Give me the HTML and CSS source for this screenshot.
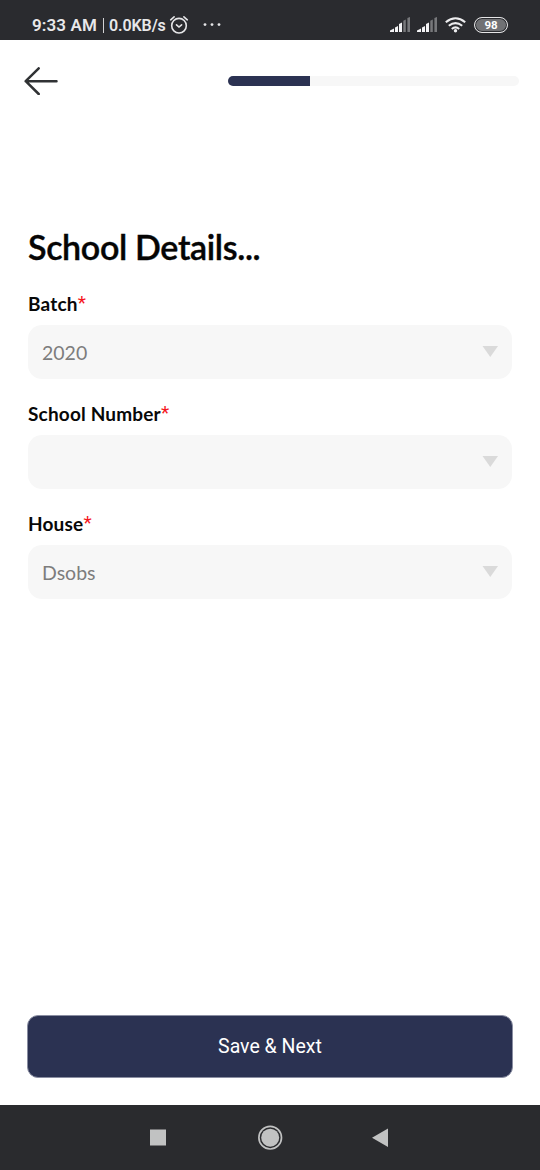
FILE: index.html
```html
<!DOCTYPE html>
<html lang="en">
<head>
<meta charset="utf-8">
<title>School Details</title>
<link rel="stylesheet" href="styles.css">
</head>
<body>
<div class="screen">
  <div class="status">
    <span class="clock">9:33 AM</span><span class="divider"></span><span class="speed">0.0KB/s</span>
    <svg class="alarm" width="20" height="20" viewBox="0 0 20 20" fill="none" stroke="#e6e6e8" stroke-width="1.6" stroke-linecap="round"><circle cx="10" cy="10.7" r="7.3"/><path d="M1.7 4.8L5.1 1.8M18.3 4.8L14.9 1.8M7.5 9.8L10 12L12.6 9.8"/></svg>
    <svg class="dots" width="20" height="4" viewBox="0 0 20 4" fill="#e6e6e8"><circle cx="2" cy="1.6" r="1.4"/><circle cx="9" cy="1.6" r="1.4"/><circle cx="16" cy="1.6" r="1.4"/></svg>
    <svg class="signal" width="21" height="16" viewBox="0 0 21 16"><path fill="#f4f4f6" d="M0 13.5L4 11.5V15H0zM5 10.5L8 9V15H5zM9 7L12 5.5V15H9z"/><path fill="#77787b" d="M13.3 3.7L15.8 2.5V15H13.3zM17.4 1L20 0V15H17.4z"/></svg>
    <svg class="signal second" width="21" height="16" viewBox="0 0 21 16"><path fill="#f4f4f6" d="M0 13.5L4 11.5V15H0zM5 10.5L8 9V15H5zM9 7L12 5.5V15H9z"/><path fill="#77787b" d="M13.3 3.7L15.8 2.5V15H13.3zM17.4 1L20 0V15H17.4z"/></svg>
    <svg class="wifi" width="22" height="16" viewBox="0 0 22 16" fill="none" stroke="#ededef" stroke-width="2.1"><path d="M.8 5.2Q10.5 -2.7 20.2 5.2M3.8 8.7Q10.5 3.4 17.2 8.7M6.8 12Q10.5 8.8 14.2 12"/><circle cx="10.5" cy="13.8" r="1.7" fill="#ededef" stroke="none"/></svg>
    <span class="battery">98</span>
  </div>
  <header class="top">
    <svg class="back" width="34" height="28" viewBox="0 0 34 28" fill="none" stroke="#303234" stroke-width="2.5" stroke-linecap="round" stroke-linejoin="round"><path d="M32.5 14.2H1.7M14.7 1.3L1.7 14.2L14.7 27"/></svg>
    <div class="progress"><div class="progress-fill"></div></div>
  </header>
  <main class="form">
    <h1>School Details...</h1>
    <div class="field"><div class="label">Batch<span>*</span></div><div class="select">2020<svg width="16" height="11" viewBox="0 0 16 11"><path fill="#dadada" d="M.5 0H16L8.3 11z"/></svg></div></div>
    <div class="field"><div class="label">School Number<span>*</span></div><div class="select"><svg width="16" height="11" viewBox="0 0 16 11"><path fill="#dadada" d="M.5 0H16L8.3 11z"/></svg></div></div>
    <div class="field"><div class="label">House<span>*</span></div><div class="select">Dsobs<svg width="16" height="11" viewBox="0 0 16 11"><path fill="#dadada" d="M.5 0H16L8.3 11z"/></svg></div></div>
  </main>
  <button class="save">Save &amp; Next</button>
  <nav class="nav">
    <svg width="540" height="65" viewBox="0 0 540 65"><path fill="#c1c2c2" d="M150 24.5H166V40.5H150zM372 32.7L388 23.5V42z"/><circle cx="270.2" cy="32.7" r="9" fill="#c1c2c2"/><circle cx="270.2" cy="32.7" r="11.3" fill="none" stroke="#c1c2c2" stroke-width="1.7"/></svg>
  </nav>
</div>
</body>
</html>
```
FILE: styles.css
```css
* { box-sizing: border-box; }
body { margin: 0; background: #fff; }
svg { display: block; flex: none; }
.screen { width: 540px; height: 1170px; display: flex; flex-direction: column; font-family: Lato, sans-serif; }
.status { height: 40px; background: #2a2b2f; display: flex; align-items: center; padding: 10px 32px 0; color: #e8e8ea; font: 600 17px/30px Roboto, sans-serif; }
.clock { width: 66px; letter-spacing: .1px; white-space: nowrap; }
.divider { width: 1.5px; height: 15px; margin: 0 5px 0 4.5px; background: #d2d2d4; }
.speed { width: 59px; padding-top: 1px; font-size: 16px; letter-spacing: -.1px; white-space: nowrap; }
.alarm { margin-left: 1px; }
.dots { margin-left: 14px; }
.signal { margin-left: auto; }
.second { margin-left: 6px; }
.wifi { margin-left: 7px; }
.battery { width: 34px; height: 16px; margin-left: 7px; border: 1.5px solid #e5e5e7; border-radius: 8px; background: #707174; box-shadow: inset 0 0 0 1px #2a2b2f; font: 700 11.5px/14px Roboto, sans-serif; text-align: center; color: #fff; }
.top { height: 187px; padding: 27px 21px 0 24px; display: flex; align-items: flex-start; justify-content: space-between; }
.progress { width: 291px; height: 10px; margin-top: 9px; border-radius: 5px; overflow: hidden; background: #f7f7f7; }
.progress-fill { width: 82px; height: 100%; background: #2b3252; }
.form { flex: 1; padding: 0 28px; }
h1 { margin: -1px 0 0; height: 66px; font-size: 34px; line-height: 41px; font-weight: 600; letter-spacing: -.34px; -webkit-text-stroke: .4px #050505; color: #050505; white-space: nowrap; }
.field { height: 110px; }
.label { height: 33px; font-size: 19px; line-height: 24px; font-weight: 700; letter-spacing: .18px; color: #080808; }
.label span { color: #f5161c; font-family: Roboto, sans-serif; font-weight: 400; line-height: 1; vertical-align: 2px; }
.select { height: 54px; padding: 0 14px; border-radius: 14px; background: #f7f7f7; display: flex; align-items: center; font-size: 19.5px; line-height: 24px; padding-top: 1px; color: #7d7d7d; }
.select svg { margin: 0 0 3px auto; }
.save { width: 486px; height: 63px; margin: 0 27px 27px; padding: 1px 0 0; border: 1px solid #8a8ea2; border-radius: 11px; background: #2b3252; color: #fff; font: 400 19.5px/60px Roboto, sans-serif; }
.nav { height: 65px; flex: none; background: #2a2b2e; }
```
